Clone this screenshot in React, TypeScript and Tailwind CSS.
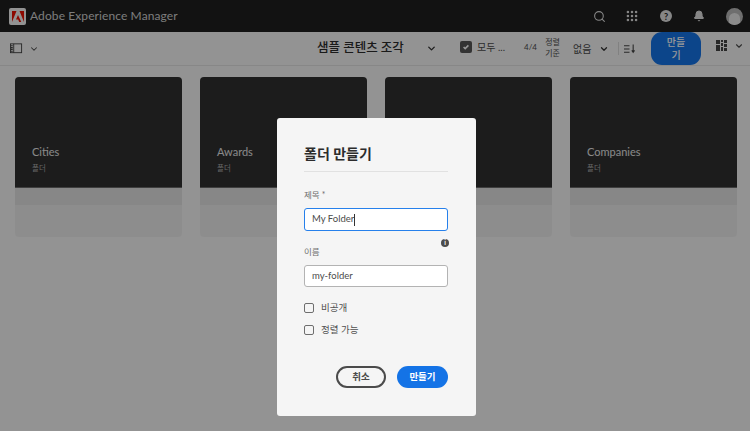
import { ChevronDown, Search, Grip, Bell } from "lucide-react"

const kr = "font-['Lato','Noto_Sans_CJK_KR',sans-serif]"

const cards = [
  { title: "Cities" },
  { title: "Awards" },
  { title: "" },
  { title: "Companies" },
]

function TopBar() {
  return (
    <header className="h-[32px] bg-[#1e1e1e] flex items-center pl-[9px] pr-[7px] shrink-0">
      <div className="w-[17px] h-[17px] rounded-[2px] bg-[#f4f4f4] flex items-center justify-center">
        <svg viewBox="0 0 24 22" className="w-[12px] h-[11px]" fill="#eb1000">
          <path d="M15 0h9v22zM9 0H0v22zM12 8l6.5 14h-4.2l-1.9-5H8z" />
        </svg>
      </div>
      <span className="ml-[4px] text-[12px] text-[#d0d0d0] tracking-[0.1px]">Adobe Experience Manager</span>
      <div className="ml-auto flex items-center">
        <Search className="w-[13px] h-[13px] text-[#e0e0e0]" strokeWidth={2} />
        <Grip className="ml-[19px] w-[14px] h-[14px] text-[#e0e0e0]" strokeWidth={2.4} />
        <div className="ml-[21px] w-[12px] h-[12px] rounded-full bg-[#e0e0e0] flex items-center justify-center text-[9px] font-bold text-[#1e1e1e] leading-none">?</div>
        <Bell className="ml-[21px] w-[12px] h-[12px] text-[#e0e0e0] fill-[#e0e0e0]" />
        <div className="ml-[21px] w-[17px] h-[17px] rounded-full bg-[#b8b8b8] flex items-end justify-center overflow-hidden">
          <div className="w-[11px] h-[12px] rounded-t-full bg-[#e8e8e8]" />
        </div>
      </div>
    </header>
  )
}

function Toolbar() {
  return (
    <div className="h-[34px] border-b border-[#e1e1e1] bg-[#f5f5f5] flex items-center relative shrink-0 text-[#4b4b4b]">
      <svg viewBox="0 0 14 11" className="ml-[10px] w-[13px] h-[11px]" fill="none" stroke="#444" strokeWidth="1">
        <rect x="0.5" y="0.5" width="12" height="9.5" />
        <path d="M4 .5v9.5" />
        <path d="M1 2.5h2M1 4.5h2M1 6.5h2M1 8.5h2" strokeWidth="1.2" />
      </svg>
      <ChevronDown className="ml-[6px] w-[10px] h-[10px]" strokeWidth={2.5} />
      <span className="ml-[278px] w-[87px] text-[12.5px] leading-none font-medium text-[#2c2c2c] whitespace-nowrap">샘플 콘텐츠 조각</span>
      <ChevronDown className="ml-[22px] w-[11px] h-[11px] text-[#333]" strokeWidth={3} />
      <div className="ml-[23px] w-[12px] h-[12px] mt-[-4px] rounded-[2px] bg-[#555] flex items-center justify-center">
        <svg viewBox="0 0 10 10" className="w-[8px] h-[8px]" fill="none" stroke="#fff" strokeWidth="2">
          <path d="M2 5l2 2 4-4" />
        </svg>
      </div>
      <span className="ml-[5px] mt-[-4px] text-[10px] leading-none w-[30px] whitespace-nowrap">모두 ...</span>
      <span className="ml-[17px] mt-[-3px] w-[12px] text-[8px] leading-none whitespace-nowrap">4/4</span>
      <div className="ml-[8px] mt-[-1px] text-[8px] leading-[11px] w-[17px] text-center">
        <div>정렬</div>
        <div>기준</div>
      </div>
      <span className="ml-[12px] w-[19px] text-[10px] leading-none whitespace-nowrap">없음</span>
      <ChevronDown className="ml-[7px] w-[10px] h-[10px] text-[#333]" strokeWidth={3} />
      <div className="ml-[9px] w-px h-[13px] bg-[#d8d8d8]" />
      <svg viewBox="0 0 12 10" className="ml-[5px] w-[11px] h-[10px]" fill="none" stroke="#444" strokeWidth="1.2">
        <path d="M0 1.5h6M0 5h6M0 8.5h6M10 0v8M8.5 6.5L10 8.5l1.5-2" />
      </svg>
      <button className="ml-[16px] w-[50px] h-[33px] rounded-[11px] bg-[#1473e6] text-white text-[10px] leading-[13px] flex flex-col items-center justify-center font-medium">
        <span>만들</span>
        <span>기</span>
      </button>
      <svg viewBox="0 0 11 11" className="ml-[15px] mt-[-7px] w-[11px] h-[11px]" fill="#444">
        <path d="M0 0h4v4H0zM5 0h2v2H5zM8 0h3v3H8zM5 3h2v3H5zM8 4h3v3H8zM0 5h4v6H0zM5 7h2v4H5zM8 8h3v3H8z" />
      </svg>
      <ChevronDown className="ml-[7px] mt-[-6px] w-[10px] h-[10px]" strokeWidth={2.6} />
    </div>
  )
}

function Card({ title }: { title: string }) {
  return (
    <div className="w-[167px] h-[160px] rounded-[4px] bg-[#ececec] overflow-hidden">
      <div className="h-[111px] bg-[#2f2f2f] flex flex-col justify-end pl-[17px] pb-[13px] border-b border-[#6a6a6a]">
        {title && (
          <>
            <div className="text-[11px] leading-[14px] text-[#e4e4e4]">{title}</div>
            <div className="mt-[5px] text-[7.5px] leading-[10px] text-[#a8a8a8]">폴더</div>
          </>
        )}
      </div>
      <div className="h-[17px] bg-[#e1e1e1]" />
    </div>
  )
}

function Check({ label }: { label: string }) {
  return (
    <label className="flex items-center h-[22px]">
      <span className="w-[10px] h-[10px] rounded-[2px] border-[1.5px] border-[#6e6e6e] bg-[#f5f5f5]" />
      <span className="ml-[7px] text-[9.5px] leading-none text-[#505050]">{label}</span>
    </label>
  )
}

function Dialog() {
  return (
    <div className="absolute inset-0 bg-black/40 flex justify-center items-start pt-[118px] pl-[3px]">
      <div className="w-[199px] h-[298px] rounded-[3px] bg-[#f5f5f5] px-[27px] flex flex-col">
        <h2 className="pt-[27px] text-[14px] leading-[18px] font-bold text-[#2c2c2c]">폴더 만들기</h2>
        <div className="mt-[8px] h-px bg-[#e1e1e1] w-[144px]" />
        <div className="mt-[17px] text-[8.5px] leading-[12px] text-[#6e6e6e]">제목 *</div>
        <div className="mt-[7px] w-[144px] h-[23px] rounded-[3px] border-[1.5px] border-[#2680eb] bg-white flex items-center pl-[7px] text-[9.5px] text-[#4b4b4b]">
          My Folder<span className="w-px h-[12px] bg-[#333]" />
        </div>
        <div className="relative mt-[15px] text-[8.5px] leading-[12px] text-[#6e6e6e]">
          이름
          <div className="absolute right-[0px] top-[-7px] w-[8px] h-[8px] rounded-full bg-[#4b4b4b] text-white text-[6.5px] leading-[8px] text-center font-bold">i</div>
        </div>
        <div className="mt-[7px] w-[144px] h-[22px] rounded-[3px] border border-[#b3b3b3] bg-white flex items-center pl-[7px] text-[9.5px] text-[#4b4b4b]">
          my-folder
        </div>
        <div className="mt-[10px] flex flex-col">
          <Check label="비공개" />
          <Check label="정렬 가능" />
        </div>
        <div className="mt-[25px] w-[144px] flex justify-end gap-[11px]">
          <button className="w-[50px] h-[22px] rounded-full border-[2px] border-[#4b4b4b] text-[9.5px] font-bold text-[#4b4b4b]">취소</button>
          <button className="w-[51px] h-[22px] rounded-full bg-[#1473e6] text-[9.5px] font-bold text-white">만들기</button>
        </div>
      </div>
    </div>
  )
}

export default function App() {
  return (
    <div className={`relative w-[750px] h-[431px] overflow-hidden bg-[#f5f5f5] flex flex-col ${kr}`}>
      <TopBar />
      <Toolbar />
      <div className="pt-[11px] pl-[15px] flex gap-[18px]">
        {cards.map((card, i) => (
          <Card key={i} title={card.title} />
        ))}
      </div>
      <Dialog />
    </div>
  )
}
